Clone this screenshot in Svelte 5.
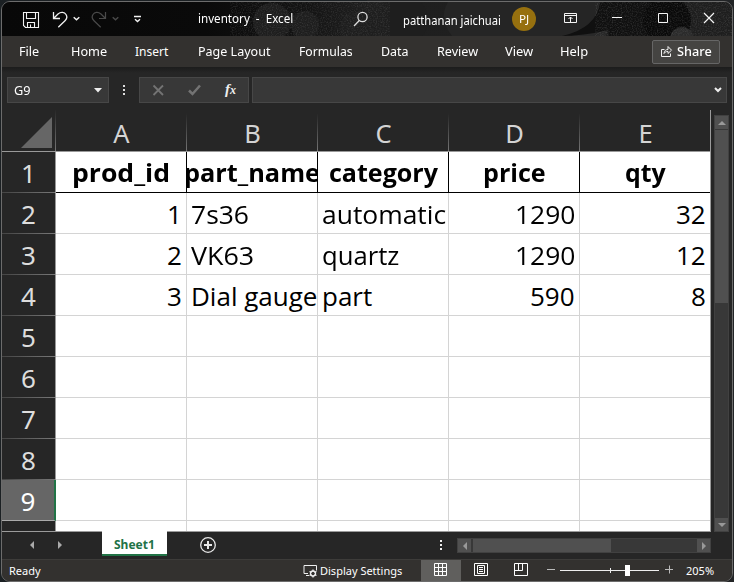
<script>
  const menus = [
    ['File', 20, 17], ['Home', 36, 32], ['Insert', 33, 28], ['Page Layout', 72, 30],
    ['Formulas', 54, 29], ['Data', 28, 28], ['Review', 41, 28], ['View', 28, 27], ['Help', 28, 27]
  ];
  const columns = ['A', 'B', 'C', 'D', 'E'];
  const rows = [
    [['prod_id', 98], ['part_name', 136], ['category', 109], ['price', 63], ['qty', 41]],
    [['1', 15, 'r'], ['7s36', 58], ['automatic', 124], ['1290', 60, 'r'], ['32', 30, 'r']],
    [['2', 15, 'r'], ['VK63', 63], ['quartz', 77], ['1290', 60, 'r'], ['12', 30, 'r']],
    [['3', 15, 'r'], ['Dial gauge', 126], ['part', 50], ['590', 45, 'r'], ['8', 15, 'r']],
    [], [], [], [], [], []
  ];

  // Scales a label horizontally so that it takes up the given width.
  function fit(node, width) {
    node.style.transform = `scaleX(${width / node.offsetWidth})`;
  }
</script>

{#snippet label(text, width)}
  <span class="label" style="width: {width}px"><span class="ink" use:fit={width}>{text}</span></span>
{/snippet}

<div class="desktop">
  <div class="window">
    <header class="title">
      <svg class="texture" width="730" height="34" viewBox="2 2 730 34">
        <defs>
          <filter id="grain" x="0" y="0" width="100%" height="100%">
            <feTurbulence type="fractalNoise" baseFrequency="0.8" numOctaves="2" />
            <feColorMatrix values="0 0 0 0 0.16  0 0 0 0 0.16  0 0 0 0 0.16  2 0 0 0 -0.85" />
          </filter>
          <linearGradient id="shade">
            <stop offset="0" stop-color="#080808" /><stop offset=".28" stop-color="#0a0a0a" />
            <stop offset=".42" stop-color="#141414" /><stop offset=".5" stop-color="#1f1f1f" />
            <stop offset="1" stop-color="#1e1e1e" />
          </linearGradient>
        </defs>
        <rect x="2" y="2" width="730" height="34" fill="url(#shade)" />
        <g fill="#1e1e1e">
          <circle cx="272" cy="22" r="19" /><circle cx="305" cy="25" r="14" />
          <circle cx="358" cy="28" r="18" /><circle cx="403" cy="20" r="25" />
        </g>
        <path d="M448 2h153q0 22-14 34h-135q-14-18-4-34z" fill="#252525" />
        <path d="M600 2h80q15 12 8 34h-80q3-6-12-2-10 2-6 2h-28q35-8 38-34z" fill="#101010" />
        <circle cx="667" cy="20" r="24" fill="#0a0a0a" />
        <path d="M559 36q25 0 49-6l-2 6z" fill="#292929" />
        <circle cx="682" cy="39" r="12" fill="#2b2b2b" />
        <rect x="230" y="2" width="160" height="34" filter="url(#grain)" opacity=".35" />
        <rect x="595" y="2" width="137" height="34" filter="url(#grain)" opacity=".4" />
      </svg>
      <svg class="icons" width="160" height="34" viewBox="2 2 160 34" fill="none" stroke="#f2f2f2" stroke-width="1.1">
        <path d="M23.500 12.500h15v15h-13l-2-2zM26.500 12.500v6h9v-6M27.500 27.500v-5h7v5M30.500 27v-2.500" />
        <path d="M53.500 12v6.500h6.500M54 18l4-4c3-2.500 6.500-1.800 8 .5s.8 4.500-1 6.200l-6.700 6.500" stroke-width="1.300" />
        <path d="M73.700 17.200l2.800 2.500 2.800-2.500" stroke-width="1.500" />
        <g stroke="#4a4a4a">
          <path d="M105.500 12v6.500h-6.500M105 18l-4-4c-3-2.500-6.500-1.800-8 .5s-.8 4.500 1 6.200l6.700 6.500" stroke-width="1.200" />
          <path d="M112.700 17.200l2.800 2.500 2.800-2.500" stroke-width="1.500" />
        </g>
        <path d="M134 16.500h7M135 19.200l2.500 2.300 2.500-2.300" stroke-width="1.400" />
      </svg>
      <div class="doc">{@render label('inventory  -  Excel', 95)}</div>
      <svg class="search" width="16" height="16" fill="none" stroke="#ddd" stroke-width="1.300"><circle cx="9.500" cy="6" r="4.600" /><path d="M6.300 9.500L1 15" /></svg>
      <div class="user">{@render label('patthanan jaichuai', 98)}</div>
      <div class="avatar">{@render label('PJ', 10)}</div>
      <svg class="controls" width="160" height="34" viewBox="562 2 160 34" fill="none" stroke="#f5f5f5" stroke-width="1">
        <path d="M564.500 13.500h12v9h-12zM564.500 15.500h12M570.500 22v-5M568.500 19l2-2 2 2" />
        <path d="M612 17.500h10M658.500 13.500h9v9h-9z" />
        <path d="M704 13l10 10M714 13l-10 10" stroke-width="1.200" />
      </svg>
    </header>

    <nav class="menu">
      {#each menus as [text, width, gap]}
        <span class="item" style="margin-left: {gap}px">{@render label(text, width)}</span>
      {/each}
      <button class="share">
        <svg width="13" height="13" fill="none" stroke="#f2f2f2" stroke-width="1"><path d="M4.500 4.500h-3v7h9v-3M4 8.500c.3-3 2-4 4-4v-3l3.500 3.700-3.500 3.300v-2c-2 0-3 .5-4 2z" /></svg>
        {@render label('Share', 35)}
      </button>
    </nav>

    <div class="formula">
      <div class="name-box">
        {@render label('G9', 17)}
        <svg width="8" height="5"><path d="M0 0h8L4 4.500z" fill="#eee" /></svg>
      </div>
      <svg class="dots" width="3" height="12" fill="#ddd"><path d="M0 1h2v2H0zM0 5h2v2H0zM0 9h2v2H0z" /></svg>
      <div class="tools">
        <svg width="109" height="24" fill="none" stroke="#737373" stroke-width="1.800">
          <path d="M13.500 7.500l9.500 9.500M23 7.500l-9.500 9.500" /><path d="M49 12.500l3.500 3.500 7.500-8.500" stroke-width="2.500" />
        </svg>
        <span class="fx">f<small>x</small></span>
      </div>
      <div class="entry"><svg width="8" height="6" fill="none" stroke="#eee" stroke-width="2"><path d="M1 1l3 3 3-3" /></svg></div>
    </div>

    <main class="body">
      <div class="grid">
        <div class="heads">
          <div class="corner"><svg width="31" height="31"><path d="M31 0v31H0z" fill="#666" /></svg></div>
          {#each columns as name}<div class="col">{name}</div>{/each}
        </div>
        {#each rows as row, i}
          <div class="row" class:first={i === 0}>
            <div class="num" class:active={i === 8}>{i < 9 ? i + 1 : ''}</div>
            {#each columns as _, j}
              <div class="cell" class:right={row[j]?.[2]}>
                {#if row[j]}{@render label(row[j][0], row[j][1])}{/if}
              </div>
            {/each}
          </div>
        {/each}
      </div>
      <div class="vbar">
        <div class="arrow"><svg width="8" height="4"><path d="M0 4L4 0l4 4z" fill="#999" /></svg></div>
        <div class="vthumb"></div>
        <div class="arrow end"><svg width="8" height="4"><path d="M0 0l4 4 4-4z" fill="#999" /></svg></div>
      </div>
    </main>

    <div class="tabs">
      <svg class="step" width="34" height="8" fill="#aaa"><path d="M4 0v8L0 4zM28 0v8l4-4z" /></svg>
      <div class="tab">{@render label('Sheet1', 41)}</div>
      <svg class="plus" width="18" height="18" fill="none" stroke="#e8e8e8"><circle cx="9" cy="9" r="7.300" stroke-width="1.300" /><path d="M5 9h8M9 5v8" stroke-width="2" /></svg>
      <svg class="more" width="2" height="10" fill="#eee"><path d="M0 0h2v2H0zM0 4h2v2H0zM0 8h2v2H0z" /></svg>
      <div class="hbar">
        <div class="harrow"><svg width="4" height="8"><path d="M4 0v8L0 4z" fill="#999" /></svg></div>
        <div class="hthumb"></div>
        <div class="harrow end"><svg width="4" height="8"><path d="M0 0v8l4-4z" fill="#999" /></svg></div>
      </div>
    </div>

    <footer class="status">
      <div class="ready">{@render label('Ready', 32)}</div>
      <svg class="display" width="16" height="14" fill="none" stroke="#eee">
        <path d="M5 9.500H1v-8h12.500v5M3 11.500h3" /><circle cx="10" cy="9.500" r="2.500" stroke-width="1.300" />
        <path d="M10 5.500v2M10 11.500v2M6.500 7.500l2 1M11.500 10.500l2 1M6.500 11.500l2-1M11.500 8.500l2-1" stroke-width="1.300" />
      </svg>
      {@render label('Display Settings', 82)}
      <div class="view"><svg width="14" height="14" fill="none" stroke="#fff"><path d="M.5.5h12v12H.5zM4.500.5v12M8.500.5v12M.5 4.500h12M.5 8.500h12" /></svg></div>
      <svg class="page" width="14" height="14" fill="none" stroke="#fff"><path d="M.5.500h13v12H.5zM3.500 2.500h7v8h-7zM5 4.500h4M5 6.500h4M5 8.500h4" /></svg>
      <svg class="break" width="14" height="14" fill="none" stroke="#fff"><path d="M.5.500h13v12H.5zM.5 7.500h8v-7M4.500.5v7" /></svg>
      <svg class="zoom" width="128" height="14" fill="none" stroke="#eee">
        <path d="M1 6.500h8" stroke="#bbb" /><path d="M14 7.500h99M64.500 5v5" /><path d="M119 6.500h8M123.500 2.500v8" stroke="#bbb" />
        <path d="M79 2h5v11h-5z" fill="#fff" stroke="none" />
      </svg>
      <div class="percent">{@render label('205%', 28)}</div>
    </footer>
  </div>
</div>

<style>
  :global(body) { margin: 0; background: #171a1d; }
  * { box-sizing: border-box; }
  svg { display: block; flex: none; }
  .desktop { width: 734px; height: 582px; padding: 1px 1px 0; overflow: hidden; background: linear-gradient(90deg, #1b2023 50%, #222426 50%); font-family: "Noto Sans", "Open Sans", sans-serif; font-size: 12px; color: #fff; }
  .window { width: 732px; height: 581px; border: 1px solid #6c6c6c; border-radius: 9px; overflow: hidden; background: #262626; display: flex; flex-direction: column; }
  .label { display: inline-block; flex: none; white-space: pre; }
  .ink { display: inline-block; transform-origin: 0 50%; white-space: pre; }
  .title { height: 34px; flex: none; display: flex; align-items: center; position: relative; }
  .title > * { position: relative; flex: none; }
  .title > .texture { position: absolute; left: 0; top: 0; }
  .doc { margin: -1px 0 0 36px; }
  .search { margin-left: 60px; }
  .user { margin: 2px 0 0 34px; }
  .avatar { width: 24px; height: 24px; margin-left: 11px; border-radius: 50%; background: #96700f; display: flex; justify-content: center; align-items: center; font-size: 10.5px; }
  .controls { margin-left: 26px; }
  .menu { height: 31px; flex: none; display: flex; align-items: center; background: #33312f; }
  .item { display: flex; }
  .share { margin: 0 12px 0 auto; width: 68px; height: 24px; border: 1px solid #666; border-radius: 2px; background: #454442; color: #fff; font: 500 12px "Noto Sans", sans-serif; display: flex; align-items: center; gap: 3px; padding: 0 0 0 7px; }
  .formula { height: 43px; flex: none; display: flex; align-items: center; padding: 3px 4px 0 5px; background: linear-gradient(#1c1c1c, #262626 6px); }
  .name-box, .tools, .entry { height: 26px; background: #383838; border: 1px solid #474747; display: flex; align-items: center; }
  .name-box { width: 102px; padding: 0 6px; justify-content: space-between; }
  .dots { margin-left: 14px; }
  .tools { width: 110px; margin-left: 13px; position: relative; }
  .fx { position: absolute; left: 85px; top: 0; font: italic bold 15px/23px "Liberation Serif", serif; color: #eee; }
  .fx small { font-size: 12px; }
  .entry { width: 475px; margin-left: 3px; justify-content: flex-end; padding-right: 4px; }
  .body { height: 422px; flex: none; display: flex; }
  .grid { width: 709px; height: 422px; overflow: hidden; border-right: 1px solid #9b9b9b; border-bottom: 1px solid #9b9b9b; background: #fff; }
  .heads { display: flex; height: 42px; background: #262626; border-bottom: 1px solid #999; }
  .corner { width: 54px; flex: none; padding: 7px 0 0 19px; border-right: 1px solid; border-image: linear-gradient(#262626, #777) 1; }
  .col { width: 131px; flex: none; padding-left: 1px; font-size: 25.5px; line-height: 46px; text-align: center; color: #d4d4d4; border-right: 1px solid; border-image: linear-gradient(#262626 10%, #777) 1; }
  .row { display: flex; height: 41px; }
  .num { width: 54px; flex: none; background: linear-gradient(90deg, #444, #777) bottom / 100% 1px no-repeat #262626; color: #ddd; font-size: 26px; line-height: 43px; text-align: center; border-right: 1px solid #999; }
  .num.active { background: #666; color: #fff; border-right: 2px solid #217346; border-bottom: 1px solid #aaa; }
  .cell { width: 131px; flex: none; padding: 0 4px; overflow: hidden; border-right: 1px solid #d4d4d4; border-bottom: 1px solid #d4d4d4; display: flex; color: #000; font: 26px/42px "Open Sans", "Noto Sans", sans-serif; }
  .right { justify-content: flex-end; }
  .first .cell { justify-content: center; font-weight: 700; font-size: 25.5px; line-height: 41px; border-color: #000; padding: 0; }
  .vbar { width: 15px; margin: 5px 0 0 3px; background: #383838; display: flex; flex-direction: column; border: 1px solid #414141; }
  .arrow { height: 13px; flex: none; background: #505050; display: flex; align-items: center; justify-content: center; }
  .vthumb { height: 173px; margin-top: 1px; background: #505050; }
  .arrow.end { margin-top: auto; }
  .tabs { height: 27px; flex: none; display: flex; align-items: flex-start; }
  .step { margin: 9px 0 0 28px; }
  .tab { width: 65px; height: 25px; margin: -1px 0 0 38px; background: #fff; border-bottom: 2px solid #217346; color: #217346; font-weight: 700; display: flex; align-items: center; justify-content: center; padding-top: 4px; position: relative; }
  .plus { margin: 4px 0 0 32px; }
  .more { margin: 8px 0 0 223px; }
  .hbar { width: 254px; height: 15px; margin: 6px 0 0 15px; background: #383838; border: 1px solid #414141; display: flex; }
  .harrow { width: 13px; background: #505050; display: flex; align-items: center; justify-content: center; }
  .hthumb { width: 138px; margin-left: 2px; background: #505050; }
  .harrow.end { margin-left: auto; }
  .status { height: 22px; flex: none; border-top: 1px solid #3d3c3a; background: #33312f; display: flex; align-items: center; font-size: 11px; }
  .ready { margin-left: 7px; width: 294px; }
  .display { margin-right: 1px; }
  .view { width: 40px; height: 21px; margin-left: 19px; background: #605f5d; display: flex; align-items: center; justify-content: center; padding-bottom: 2px; }
  .page { margin-left: 13px; margin-bottom: 2px; }
  .break { margin-left: 26px; margin-bottom: 2px; }
  .zoom { margin-left: 18px; margin-bottom: 1px; }
  .percent { margin-left: 12px; }
</style>
